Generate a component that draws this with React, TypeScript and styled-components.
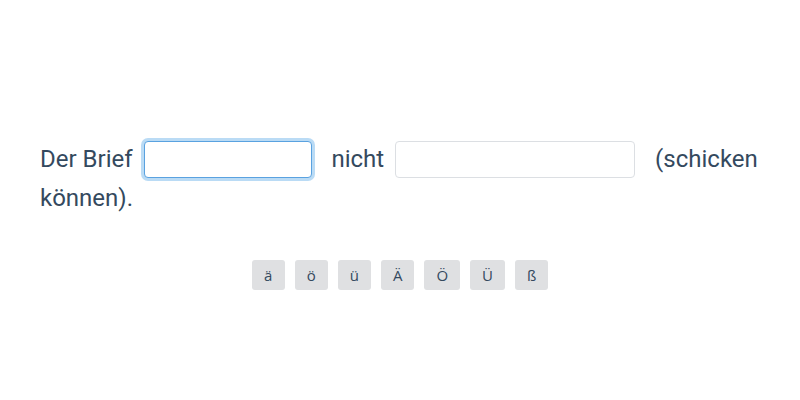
import React from "react";
import styled, { createGlobalStyle } from "styled-components";

const Global = createGlobalStyle`
  html, body { margin: 0; padding: 0; background: #ffffff; }
  body { font-family: Roboto, "Liberation Sans", sans-serif; color: #34495e; }
`;

const Page = styled.div`
  width: 800px;
  height: 400px;
  box-sizing: border-box;
  padding: 140px 40px 0;
  display: flex;
  flex-direction: column;
`;

const Sentence = styled.p`
  margin: 0;
  font-size: 24px;
  line-height: 39px;
  color: #34495e;
`;

const Blank = styled.input<{ $w: number }>`
  width: ${(p) => p.$w}px;
  height: 37px;
  box-sizing: border-box;
  margin: 0 14px 0 5px;
  padding: 0 6px;
  vertical-align: middle;
  border: 1px solid #dcdfe3;
  border-radius: 4px;
  font-family: Roboto, sans-serif;
  font-size: 18px;
  color: #34495e;
  background: #fff;
  outline: none;
  position: relative;
  top: -1px;
  &:focus {
    border-color: #5aa2e0;
    box-shadow: 0 0 0 3px rgba(102, 175, 233, 0.45);
  }
`;

const Keys = styled.div`
  display: flex;
  justify-content: center;
  gap: 10px;
  margin-top: 42px;
`;

const Key = styled.button`
  height: 30px;
  min-width: 33px;
  padding: 0 12px;
  box-sizing: border-box;
  border: none;
  border-radius: 3px;
  background: #dfe0e2;
  color: #34495e;
  font-family: "Open Sans", sans-serif;
  font-size: 15px;
  cursor: pointer;
`;

const letters = ["ä", "ö", "ü", "Ä", "Ö", "Ü", "ß"];

export default function App() {
  return (
    <>
      <Global />
      <Page>
        <Sentence>
          Der Brief <Blank $w={168} autoFocus /> nicht <Blank $w={240} /> (schicken können).
        </Sentence>
        <Keys>
          {letters.map((l) => (
            <Key key={l}>{l}</Key>
          ))}
        </Keys>
      </Page>
    </>
  );
}
